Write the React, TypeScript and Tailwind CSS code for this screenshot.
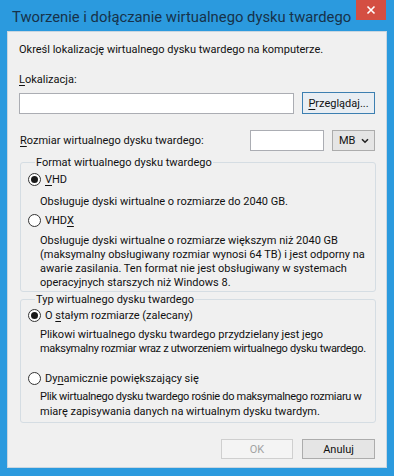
import React from 'react';

const font = "font-['Roboto','Liberation_Sans',sans-serif]";

function Radio({ checked }: { checked?: boolean }) {
  return (
    <span className="flex h-[13px] w-[13px] shrink-0 items-center justify-center rounded-full border border-[#333] bg-white">
      {checked ? <span className="h-[7px] w-[7px] rounded-full bg-[#1a1a1a]" /> : null}
    </span>
  );
}

function Group({ title, className, children }: { title: string; className?: string; children: React.ReactNode }) {
  return (
    <fieldset className={`ml-[1px] w-[356px] min-w-0 rounded-[3px] border border-[#d5dde3] pl-[7px] pr-[6px] ${className ?? ''}`}>
      <legend className="ml-[7px] px-[1px] leading-[15px]">{title}</legend>
      {children}
    </fieldset>
  );
}

export default function App() {
  return (
    <div className={`flex h-[476px] w-[394px] flex-col overflow-hidden bg-[#2b9ade] text-[11px] leading-[15px] text-[#111] ${font}`}>
      {/* title bar */}
      <div className="flex h-[31px] shrink-0 items-start">
        <span className="whitespace-nowrap pl-[12px] pt-[7px] text-[14.8px] leading-[20px] text-[#17324a]">
          Tworzenie i dołączanie wirtualnego dysku twardego
        </span>
        <div className="ml-auto mr-[8px] flex h-[20px] w-[30px] shrink-0 items-center justify-center bg-[#d44f42]">
          <svg width="10" height="10" viewBox="0 0 10 10">
            <path d="M1.5 1.5 L8.5 8.5 M8.5 1.5 L1.5 8.5" stroke="#fff" strokeWidth="1.6" />
          </svg>
        </div>
      </div>

      {/* client area */}
      <div className="mx-[7px] flex h-[437px] flex-col whitespace-nowrap border border-[#c9d6e0] bg-[#f0f0f0] px-[11px] pt-[10px]">
        <div>Określ lokalizację wirtualnego dysku twardego na komputerze.</div>

        <div className="mt-[15px]">
          <span className="underline underline-offset-2">L</span>okalizacja:
        </div>
        <div className="mt-[5px] flex items-center gap-[8px]">
          <div className="h-[21px] w-[275px] border border-[#abadb3] bg-white" />
          <div className="flex h-[22px] w-[73px] items-center justify-center border border-[#3c7fb1] bg-[#e9eef3]">
            <span><span className="underline underline-offset-2">P</span>rzeglądaj...</span>
          </div>
        </div>

        <div className="mt-[16px] flex h-[21px] items-center">
          <span className="ml-[1px]">
            <span className="underline underline-offset-2">R</span>ozmiar wirtualnego dysku twardego:
          </span>
          <div className="ml-auto h-[21px] w-[74px] border border-[#abadb3] bg-white" />
          <div className="ml-[8px] flex h-[21px] w-[43px] items-center justify-between border border-[#acacac] bg-[#e5e5e5] pl-[6px] pr-[5px]">
            <span>MB</span>
            <svg width="8" height="6" viewBox="0 0 8 6">
              <path d="M1 1.2 L4 4.2 L7 1.2" stroke="#222" strokeWidth="1.6" fill="none" />
            </svg>
          </div>
        </div>

        <div className="mt-[4px]">
          <Group title="Format wirtualnego dysku twardego" className="pb-[1px]">
            <div className="mt-[2px] flex items-center gap-[4px]">
              <Radio checked />
              <span><span className="underline underline-offset-2">V</span>HD</span>
            </div>
            <div className="mt-[7px] pl-[12px]">Obsługuje dyski wirtualne o rozmiarze do 2040 GB.</div>
            <div className="mt-[4px] flex items-center gap-[4px]">
              <Radio />
              <span>VHD<span className="underline underline-offset-2">X</span></span>
            </div>
            <div className="mt-[6px] pl-[12px] leading-[14px]">
              Obsługuje dyski wirtualne o rozmiarze większym niż 2040 GB
              <br />
              (maksymalny obsługiwany rozmiar wynosi 64 TB) i jest odporny na
              <br />
              awarie zasilania. Ten format nie jest obsługiwany w systemach
              <br />
              operacyjnych starszych niż Windows 8.
            </div>
          </Group>
        </div>

        <div>
          <Group title="Typ wirtualnego dysku twardego" className="pb-[3px]">
            <div className="mt-[1px] flex items-center gap-[4px]">
              <Radio checked />
              <span>O <span className="underline underline-offset-2">s</span>tałym rozmiarze (zalecany)</span>
            </div>
            <div className="mt-[5px] pl-[12px] leading-[14px]">
              Plikowi wirtualnego dysku twardego przydzielany jest jego
              <br />
              <span className="tracking-[-0.3px]">maksymalny rozmiar wraz z utworzeniem wirtualnego dysku twardego.</span>
            </div>
            <div className="mt-[15px] flex items-center gap-[4px]">
              <Radio />
              <span>Dy<span className="underline underline-offset-2">n</span>amicznie powiększający się</span>
            </div>
            <div className="mt-[3px] pl-[12px] leading-[15px]">
              <span className="tracking-[-0.3px]">Plik wirtualnego dysku twardego rośnie do maksymalnego rozmiaru w</span>
              <br />
              miarę zapisywania danych na wirtualnym dysku twardym.
            </div>
          </Group>
        </div>

        <div className="mt-[16px] flex justify-end gap-[9px]">
          <div className="flex h-[20px] w-[72px] items-center justify-center border border-[#cfcfcf] bg-[#f4f4f4] text-[#a3a3a3]">
            OK
          </div>
          <div className="flex h-[20px] w-[73px] items-center justify-center border border-[#acacac] bg-[#e5e5e5]">
            Anuluj
          </div>
        </div>
      </div>
    </div>
  );
}
